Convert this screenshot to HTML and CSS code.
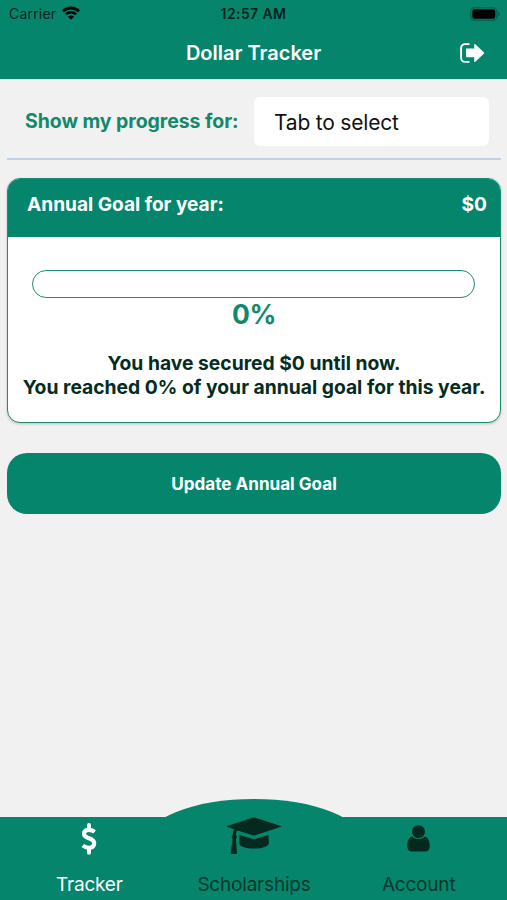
FILE: index.html
```html
<!DOCTYPE html>
<html lang="en">
<head>
  <meta charset="UTF-8" />
  <meta name="viewport" content="width=device-width, initial-scale=1" />
  <title>Dollar Tracker</title>
  <link rel="stylesheet" href="styles.css">
</head>
<body>
  <header class="header">
    <div class="status-bar">
      <div class="carrier">
        <span>Carrier</span>
        <svg class="wifi" viewBox="0 0 18 14" width="18" height="14">
          <path d="M1 5.2a11.5 11.5 0 0 1 16 0" fill="none" stroke="#000" stroke-width="2.9" />
          <path d="M3.9 8.4a7.3 7.3 0 0 1 10.2 0" fill="none" stroke="#000" stroke-width="2.6" />
          <path d="M9 13.8L5.900 10.700a4.400 4.400 0 0 1 6.200 0z" />
        </svg>
      </div>
      <span class="clock">12:57 AM</span>
      <div class="battery-wrap">
        <svg width="31" height="14" viewBox="0 0 31 14">
          <rect x=".7" y=".7" width="26.2" height="12.6" rx="4" fill="none" stroke="#036450" stroke-width="1.4" />
          <rect x="2.3" y="2.3" width="23" height="9.4" rx="2.3" />
          <path d="M28.2 4.6c2.2.8 2.2 4 0 4.8z" fill="#036450" />
        </svg>
      </div>
    </div>
    <div class="title-bar">
      <h1>Dollar Tracker</h1>
      <button type="button" class="logout" aria-label="Log out">
        <svg width="25" height="20" viewBox="0 0 25 20">
          <path d="M9.5 1.1H5A3.9 3.9 0 0 0 1.1 5v10A3.9 3.9 0 0 0 5 18.9h4.500" fill="none" stroke="#fff" stroke-width="1.9" />
          <path d="M7 5.600h7.200V1.800c0-.8.7-1 1.200-.5l8.600 8.100c.3.3.3.8 0 1.100l-8.600 8.200c-.5.500-1.200.2-1.200-.5V14.300H7c-.6 0-1-.4-1-1V6.600c0-.6.4-1 1-1z" fill="#fff" />
        </svg>
      </button>
    </div>
  </header>

  <main class="content">
    <div class="filter">
      <label for="year">Show my progress for:</label>
      <button type="button" class="picker" id="year">Tab to select</button>
    </div>

    <section class="card">
      <div class="card-header">
        <span>Annual Goal for year:</span>
        <span>$0</span>
      </div>
      <div class="card-body">
        <div class="progress"></div>
        <p class="percent">0%</p>
        <p class="line">You have secured $0 until now.</p>
        <p class="line">You reached 0% of your annual goal for this year.</p>
      </div>
    </section>

    <button type="button" class="update">Update Annual Goal</button>
  </main>

  <nav class="tabs">
    <div class="tab active">
      <svg class="icon" width="18" height="32" viewBox="0 0 18 32">
        <path d="M9 2v4M9 26v3.800" fill="none" stroke="#fff" stroke-width="4" stroke-linecap="round" />
        <path d="M14.600 8.800C12.800 7.400 10.800 6.800 8.700 6.800c-3 0-4.700 1.500-4.700 3.600 0 2.700 2.200 3.900 5 4.900s5.200 2.300 5.200 5-2 4.500-5.200 4.500c-2.500 0-4.500-.9-6.200-2.300" fill="none" stroke="#fff" stroke-width="4.200" />
      </svg>
      <span>Tracker</span>
    </div>
    <div class="tab">
      <svg class="icon cap" width="56" height="38" viewBox="0 0 56 38">
        <path d="M27.300.6q.7-.2 1.400 0l26.200 8.300q.9.400 0 .9L28.700 18.500q-.7.200-1.400 0L11.600 13.500C10.400 14.600 10 16 9.900 18c1.300 1.100 1.200 2.900 0 3.900L11 36c0 .7-.3 1-.9 1H5.600c-.6 0-.9-.3-.9-1L6.600 21.900c-1.300-1.100-1.200-3 .1-4 .1-2.500.6-4.400 1.700-5.500L1.100 9.800q-.9-.5 0-.9z" />
        <path d="M13.600 18l12.800 3.700q1.600.5 3.200 0l12.800-3.700.5 7.800c.2 3.300-6.700 5.800-14.900 5.800S12.900 29.100 13.100 25.800z" />
      </svg>
      <span>Scholarships</span>
    </div>
    <div class="tab">
      <svg class="icon" width="23" height="27" viewBox="0 0 23 27">
        <circle cx="11.500" cy="6.700" r="6.500" />
        <path d="M5.200 11.400c3.500 3.500 9.100 3.500 12.600 0 3.200.7 4.900 4.300 4.900 9.300 0 3.900-1.800 5.900-4.700 5.900H5C2.100 26.600.3 24.600.3 20.700c0-5 1.700-8.600 4.900-9.300z" />
      </svg>
      <span>Account</span>
    </div>
  </nav>
</body>
</html>
```
FILE: styles.css
```css
* {
  box-sizing: border-box;
}
body {
  margin: 0;
  height: 100vh;
  display: flex;
  flex-direction: column;
  overflow: hidden;
  background-color: #f1f1f1;
  font-family: Inter, "Liberation Sans", sans-serif;
}
h1, p {
  margin: 0;
}
button {
  font-family: inherit;
  border: none;
  padding: 0;
}
svg {
  display: block;
}

/* header */
.header {
  height: 79px;
  background-color: #05866c;
}
.status-bar {
  height: 27px;
  display: grid;
  grid-template-columns: 1fr auto 1fr;
  align-items: center;
  padding: 0 6px 0 9px;
  font-size: 14px;
  color: #02231b;
}
.carrier {
  display: flex;
  gap: 6px;
  letter-spacing: 0.2px;
}
.wifi {
  margin-top: 1px;
}
.clock {
  margin-left: -3px;
  font-weight: 600;
  letter-spacing: 0.4px;
}
.battery-wrap {
  display: flex;
  justify-content: flex-end;
}
.title-bar {
  height: 51px;
  display: grid;
  grid-template-columns: 1fr auto 1fr;
  align-items: center;
  padding: 0 22px;
}
.title-bar h1 {
  grid-column: 2;
  font-size: 20px;
  font-weight: 600;
  color: white;
}
.logout {
  justify-self: end;
  background: none;
}

/* content */
.content {
  flex: 1;
  padding: 0 6px 0 7px;
}
.filter {
  height: 81px;
  display: flex;
  align-items: center;
  justify-content: space-between;
  padding: 5px 12px 0 18px;
  border-bottom: 2px solid #c3d2e2;
}
.filter label {
  font-size: 19.5px;
  font-weight: 700;
  letter-spacing: -0.07px;
  color: #12896b;
}
.picker {
  width: 235px;
  height: 49px;
  padding: 2px 0 0 20px;
  border-radius: 6px;
  background-color: white;
  color: #111;
  font-size: 21px;
  letter-spacing: -0.2px;
  text-align: left;
}
.card {
  height: 245px;
  margin-top: 18px;
  border: 1px solid #1b8c70;
  border-radius: 13px;
  background-color: white;
  overflow: hidden;
  box-shadow: 0 1px 3px rgba(0,0,0,0.2);
}
.card-header {
  height: 58px;
  display: flex;
  justify-content: space-between;
  padding: 13px 13px 0 19px;
  background-color: #05866c;
  color: white;
  font-size: 19.1px;
  font-weight: 700;
  line-height: 24px;
}
.card-body {
  padding: 33px 0 0;
  text-align: center;
}
.progress {
  height: 28px;
  margin: 0 25px 0 24px;
  border: 1.5px solid #1b8c70;
  border-radius: 14px;
}
.percent {
  font-size: 26.5px;
  line-height: 32px;
  font-weight: 700;
  letter-spacing: -0.3px;
  color: #12896b;
  margin-bottom: 22px;
}
.line {
  font-size: 19.3px;
  line-height: 23.5px;
  font-weight: 650;
  color: #052c22;
  white-space: nowrap;
}
.update {
  display: block;
  width: 100%;
  height: 61px;
  margin-top: 30px;
  border-radius: 20px;
  background-color: #05866c;
  color: white;
  font-size: 17.1px;
  font-weight: 700;
}

/* bottom tabs */
.tabs {
  position: relative;
  height: 83px;
  display: grid;
  grid-template-columns: repeat(3, 1fr);
  padding: 0 6px 0 7px;
  background-color: #05866c;
}
/* raised middle of the bar */
.tabs::before {
  content: "";
  position: absolute;
  top: -18px;
  left: 144px;
  width: 220px;
  height: 88px;
  border-radius: 50%;
  background-color: #05866c;
}
.tab {
  position: relative;
  height: 83px;
  display: flex;
  flex-direction: column;
  align-items: center;
  justify-content: space-between;
  padding: 6px 0 3px;
  font-size: 19px;
  line-height: 24px;
  letter-spacing: -0.2px;
  color: #04382c;
}
.tab .icon {
  fill: #04291f;
}
.tab .cap {
  margin-top: -6px;
}
.tab:last-child .icon {
  margin-top: 2px;
}
.tab.active {
  color: white;
}
```
